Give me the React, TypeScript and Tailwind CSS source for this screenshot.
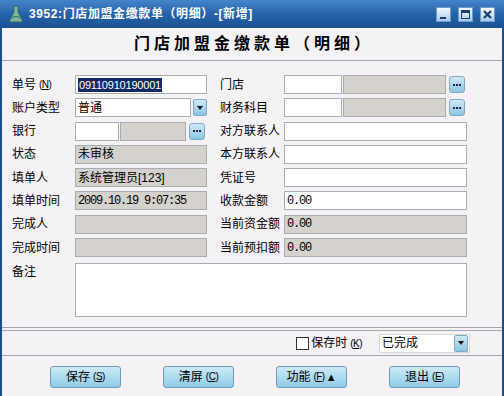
const font = "font-[family-name:'Liberation_Sans','Noto_Sans_CJK_SC',sans-serif]";

const box = "h-[19px] border border-[#a9acb1] flex items-center px-[2px] text-[12px] leading-none text-black overflow-hidden whitespace-nowrap";
const white = `${box} bg-white`;
const gray = `${box} bg-[#d5d2cd]`;

function Hot({ k }: { k: string }) {
  return (
    <span className="text-[10px] ml-[3px] tracking-[-0.5px]">
      (<span className="underline">{k}</span>)
    </span>
  );
}

function Dots() {
  return (
    <button
      type="button"
      className="ml-[3px] h-[17px] w-[16px] shrink-0 rounded-[3px] border border-[#7ea8c6] bg-gradient-to-b from-[#cfe9f6] to-[#8cc5e3] flex items-center justify-center"
    >
      <span className="flex gap-[1px]">
        <i className="block w-[2px] h-[2px] bg-[#1e2c3c]" />
        <i className="block w-[2px] h-[2px] bg-[#1e2c3c]" />
        <i className="block w-[2px] h-[2px] bg-[#1e2c3c]" />
      </span>
    </button>
  );
}

function Arrow() {
  return (
    <span className="h-[17px] w-[14px] shrink-0 rounded-[2px] border border-[#7ea8c6] bg-gradient-to-b from-[#cfe9f6] to-[#8cc5e3] flex items-center justify-center">
      <svg width="6" height="4" viewBox="0 0 6 4">
        <path d="M0 0h6L3 4z" fill="#111" />
      </svg>
    </span>
  );
}

function Lookup({ a, b }: { a: string; b: string }) {
  return (
    <div className="flex items-center">
      <div className={`${white} ${a}`} />
      <div className={`${gray} ${b} ml-[1px]`} />
      <Dots />
    </div>
  );
}

function Label({ children, w }: { children: React.ReactNode; w: string }) {
  return <div className={`${w} shrink-0 text-[12px] leading-none text-black flex items-center`}>{children}</div>;
}

function Row({ left, lbl, right, rlbl }: { left: React.ReactNode; lbl: React.ReactNode; right: React.ReactNode; rlbl: React.ReactNode }) {
  return (
    <div className="flex items-center h-[19px]">
      <Label w="w-[63px]">{lbl}</Label>
      <div className="w-[132px] shrink-0">{left}</div>
      <div className="w-[13px] shrink-0" />
      <Label w="w-[64px]">{rlbl}</Label>
      <div className="w-[183px] shrink-0">{right}</div>
    </div>
  );
}

const mono = "font-['Liberation_Mono'] tracking-[-1.2px]";

function WinBtn({ kind }: { kind: "min" | "max" | "close" }) {
  return (
    <span className="w-[15px] h-[15px] border border-[#6e9bd0] bg-gradient-to-b from-[#f2f8fd] to-[#a8cbeb] relative block">
      {kind === "min" && <i className="absolute left-[3px] bottom-[2px] w-[6px] h-[2px] bg-[#1c3d6c]" />}
      {kind === "max" && (
        <i className="absolute left-[2px] top-[2px] w-[9px] h-[9px] border border-[#1c3d6c] border-t-[3px]" />
      )}
      {kind === "close" && (
        <svg className="absolute left-[2px] top-[2px]" width="9" height="9" viewBox="0 0 9 9">
          <path d="M1 1l7 7M8 1L1 8" stroke="#1c3d6c" strokeWidth="2.2" />
        </svg>
      )}
    </span>
  );
}

function Button({ text, k, tri }: { text: string; k: string; tri?: boolean }) {
  return (
    <button
      type="button"
      className="w-[71px] h-[22px] rounded-[3px] border border-[#6f9bb8] bg-gradient-to-b from-[#cdeaf7] to-[#8fcbe6] text-[12px] leading-none text-black flex items-center justify-center"
    >
      {text}
      <Hot k={k} />
      {tri && <span className="text-[11px] ml-[1px]">▲</span>}
    </button>
  );
}

export default function App() {
  return (
    <div className={`w-[504px] h-[396px] bg-[#1d4f8f] flex flex-col overflow-hidden ${font}`}>
      <div className="h-[28px] shrink-0 bg-gradient-to-b from-[#4585c9] via-[#2563a9] to-[#1c5194] flex items-center px-[8px]">
        <svg width="16" height="18" viewBox="0 0 16 18" className="mr-[5px]">
          <path d="M6 1h4v6l4 8c1 2 0 2-1 2H3c-1 0-2 0-1-2l4-8z" fill="#7fb79a" stroke="#2f6b63" strokeWidth="1" />
          <path d="M4 13c2-2 6-2 8 0" stroke="#2f6b63" strokeWidth="1" fill="none" />
        </svg>
        <span className="text-white text-[12px] font-bold leading-none tracking-[0.6px]">3952:门店加盟金缴款单（明细）-[新增]</span>
        <div className="ml-auto flex gap-[7px] mr-[1px]">
          <WinBtn kind="min" />
          <WinBtn kind="max" />
          <WinBtn kind="close" />
        </div>
      </div>
      <div className="flex-1 mx-[2px] bg-[#f5f2f5] flex flex-col">
        <div className="h-[32px] shrink-0 flex items-center justify-center">
          <span className="text-[16px] font-bold tracking-[4px] text-black leading-none ml-[4px]">门店加盟金缴款单（明细）</span>
        </div>
        <div className="h-[268px] shrink-0 border-y border-[#a3a6ab] pt-[14px] pl-[10px] flex flex-col gap-[4.3px]">
          <Row
            lbl={<>单号<Hot k="N" /></>}
            left={
              <div className={white}>
                <span className="bg-[#13296a] text-white text-[11px] px-[1px] tracking-[-0.2px] leading-[14px]">09110910190001</span>
              </div>
            }
            rlbl="门店"
            right={<Lookup a="w-[58px]" b="w-[103px]" />}
          />
          <Row
            lbl="账户类型"
            left={
              <div className="flex items-center">
                <div className={`${white} w-[116px]`}>普通</div>
                <span className="ml-[2px]"><Arrow /></span>
              </div>
            }
            rlbl="财务科目"
            right={<Lookup a="w-[58px]" b="w-[103px]" />}
          />
          <Row
            lbl="银行"
            left={<Lookup a="w-[44px]" b="w-[66px]" />}
            rlbl="对方联系人"
            right={<div className={white} />}
          />
          <Row lbl="状态" left={<div className={gray}>未审核</div>} rlbl="本方联系人" right={<div className={white} />} />
          <Row lbl="填单人" left={<div className={gray}>系统管理员[123]</div>} rlbl="凭证号" right={<div className={white} />} />
          <Row
            lbl="填单时间"
            left={<div className={`${gray} ${mono}`}>2009.10.19 9:07:35</div>}
            rlbl="收款金额"
            right={<div className={`${white} ${mono}`}>0.00</div>}
          />
          <Row lbl="完成人" left={<div className={gray} />} rlbl="当前资金额" right={<div className={`${gray} ${mono}`}>0.00</div>} />
          <Row lbl="完成时间" left={<div className={gray} />} rlbl="当前预扣额" right={<div className={`${gray} ${mono}`}>0.00</div>} />
          <div className="flex mt-[2px]">
            <Label w="w-[63px] self-start pt-[3px]">备注</Label>
            <div className="w-[392px] h-[54px] border border-[#a9acb1] bg-white" />
          </div>
        </div>
        <div className="h-[26px] shrink-0 mt-[2px] border-y border-[#a3a6ab] flex items-center justify-end pr-[32px]">
          <span className="w-[13px] h-[13px] border border-[#333] bg-white mr-[2px]" />
          <span className="text-[12px] leading-none text-black">保存时</span>
          <Hot k="K" />
          <div className="ml-[17px] flex items-center h-[19px] w-[91px] bg-white border border-[#d8d8d8]">
            <span className="text-[12px] leading-none px-[2px] flex-1">已完成</span>
            <span className="mr-[1px]"><Arrow /></span>
          </div>
        </div>
        <div className="flex pl-[48px] gap-[42px] pt-[10px]">
          <Button text="保存" k="S" />
          <Button text="清屏" k="C" />
          <Button text="功能" k="F" tri />
          <Button text="退出" k="E" />
        </div>
      </div>
    </div>
  );
}
